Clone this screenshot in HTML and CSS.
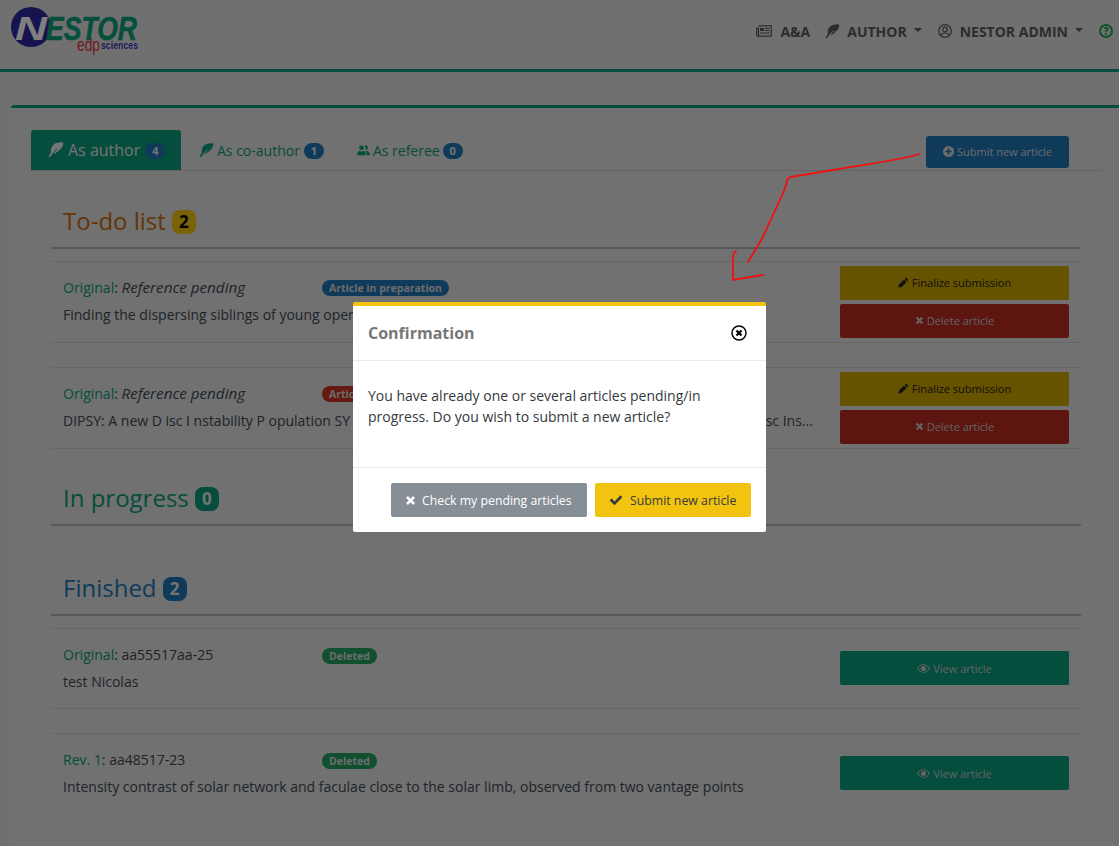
FILE: index.html
```html
<!DOCTYPE html>
<html lang="en">
<head>
<meta charset="utf-8">
<title>Nestor</title>
<link rel="stylesheet" href="styles.css">
</head>
<body>
<svg class="defs" width="0" height="0" aria-hidden="true">
  <symbol id="i-feather" viewBox="0 0 16 16"><path d="M15.3.7C11.8-.2 7.6.6 5 3.2 3 5.2 2.7 8 3 10.3L.5 14.6l1 .8L5 11.2l3.6-4.4.6.5L6 11.6l1.2.1 1.7-1.3-1-.2 2.2-.6 1.3-1.2-1.6-.1 2.6-.8C14 5.600 15.400 3 15.300.7z"/></symbol>
  <symbol id="i-users" viewBox="0 0 16 14"><circle cx="5.500" cy="3.500" r="3"/><path d="M0 13c0-3.500 1.500-5.500 3.500-5.800L5.500 8.500l2-1.300C9.500 7.500 11 9.500 11 13z"/><path d="M9 .8a3 3 0 1 1 1.500 5.500c.7-1.500.5-4-1.500-5.500zM10.200 7.400c3.300-.6 5.800 1.600 5.800 5.600h-4c0-2.500-.6-4.200-1.800-5.600z"/></symbol>
  <symbol id="i-plus-c" viewBox="0 0 16 16"><path fill-rule="evenodd" d="M8 0a8 8 0 1 1 0 16A8 8 0 0 1 8 0zM6.800 3.500v3.300H3.500v2.400h3.300v3.300h2.400V9.200h3.300V6.800H9.200V3.500z"/></symbol>
  <symbol id="i-pencil" viewBox="0 0 16 16"><path d="M11.500.8l3.700 3.700-1.700 1.700-3.700-3.700zM8.800 3.500l3.700 3.700-7.400 7.400L.6 15.400l.8-4.500z"/></symbol>
  <symbol id="i-times" viewBox="0 0 16 16"><path d="M4.200 1.500L8 5.300l3.800-3.800 2.700 2.700L10.700 8l3.800 3.800-2.700 2.700L8 10.700l-3.800 3.800-2.700-2.700L5.300 8 1.500 4.200z"/></symbol>
  <symbol id="i-check" viewBox="0 0 16 16"><path d="M.8 8.500l2.200-2.200 3.400 3.400 6.600-7 2.200 2.200-8.800 9.200z"/></symbol>
  <symbol id="i-eye" viewBox="0 0 18 12"><path fill-rule="evenodd" d="M9 0c3.800 0 7 2.500 9 6-2 3.500-5.200 6-9 6S2 9.500 0 6c2-3.500 5.200-6 9-6zm0 1.300C6 1.300 3.300 3.100 1.600 6 3.300 8.900 6 10.700 9 10.700s5.700-1.800 7.400-4.700C14.700 3.100 12 1.300 9 1.300zM9 2.500a3.500 3.500 0 1 1 0 7 3.500 3.500 0 0 1 0-7z"/></symbol>
</svg>

<div class="page">
  <header class="navbar">
    <svg class="logo" width="150" height="60" viewBox="0 0 150 60">
      <circle cx="31" cy="27" r="20" fill="#2a289e"/>
      <text class="logo-n" x="15" y="40" textLength="32" lengthAdjust="spacingAndGlyphs">N</text>
      <text class="logo-estor" x="46" y="40" textLength="91" lengthAdjust="spacingAndGlyphs">ESTOR</text>
      <text class="logo-edp" x="77" y="51" textLength="23" lengthAdjust="spacingAndGlyphs">edp</text>
      <text class="logo-sciences" x="101" y="49" textLength="37" lengthAdjust="spacingAndGlyphs">sciences</text>
    </svg>
    <nav class="nav-links">
      <span class="nav-item nav-aa">
        <svg class="nav-ico" width="16" height="12" viewBox="0 0 16 12"><path fill="none" stroke="currentColor" stroke-width="1.200" d="M2.500.8h12.700v10.400H1.500A.8.800 0 0 1 .7 10.400V3h1.800v7.500"/><path fill="currentColor" d="M4 3h4v3H4zM9 3h4.500v1H9zM9 5h4.500v1H9zM4 7.500h9.500v1H4z"/></svg>
        <span>A&amp;A</span>
      </span>
      <span class="nav-item nav-author">
        <svg class="nav-ico" width="15" height="15"><use href="#i-feather"/></svg>
        <span>AUTHOR</span><i class="caret"></i>
      </span>
      <span class="nav-item">
        <svg class="nav-ico" width="14" height="14" viewBox="0 0 14 14"><g fill="none" stroke="currentColor" stroke-width="1.200"><circle cx="7" cy="7" r="6.300"/><circle cx="7" cy="5.500" r="2.300"/><path d="M2.800 11.500c.6-1.800 2-2.500 4.200-2.500s3.600.7 4.200 2.500"/></g></svg>
        <span>NESTOR ADMIN</span><i class="caret"></i>
      </span>
      <span class="help" aria-label="Help">?</span>
    </nav>
  </header>

  <main class="card">
    <div class="tabs">
      <a class="tab active">
        <svg width="16" height="16"><use href="#i-feather"/></svg>
        <span>As author</span><b class="pill">4</b>
      </a>
      <a class="tab">
        <svg width="15" height="15"><use href="#i-feather"/></svg>
        <span>As co-author</span><b class="pill">1</b>
      </a>
      <a class="tab tab-ref">
        <svg width="13" height="11"><use href="#i-users"/></svg>
        <span>As referee</span><b class="pill">0</b>
      </a>
      <a class="submit-btn">
        <svg width="11" height="11"><use href="#i-plus-c"/></svg>
        <span>Submit new article</span>
      </a>
    </div>

    <section class="group group-todo">
      <h2 class="heading heading-todo"><span>To-do list</span><span class="count count-yellow">2</span></h2>
      <div class="rows">
        <article class="row">
          <div class="row-main">
            <div class="row-meta"><span class="ref"><a class="kind">Original</a>: <em>Reference pending</em></span><span class="status status-blue">Article in preparation</span></div>
            <p class="row-title">Finding the dispersing siblings of young open clusters with a new approach</p>
          </div>
          <div class="actions">
            <a class="btn btn-yellow"><svg width="11" height="11"><use href="#i-pencil"/></svg><span>Finalize submission</span></a>
            <a class="btn btn-red"><svg width="9" height="9"><use href="#i-times"/></svg><span>Delete article</span></a>
          </div>
        </article>
        <article class="row">
          <div class="row-main">
            <div class="row-meta"><span class="ref"><a class="kind">Original</a>: <em>Reference pending</em></span><span class="status status-red">Article in preparation</span></div>
            <p class="row-title">DIPSY: A new D isc I nstability P opulation SY nthesis tool for studying the global stellar evolution of those D isc Ins...</p>
          </div>
          <div class="actions">
            <a class="btn btn-yellow"><svg width="11" height="11"><use href="#i-pencil"/></svg><span>Finalize submission</span></a>
            <a class="btn btn-red"><svg width="9" height="9"><use href="#i-times"/></svg><span>Delete article</span></a>
          </div>
        </article>
      </div>
    </section>

    <section class="group group-progress">
      <h2 class="heading heading-green"><span>In progress</span><span class="count count-green">0</span></h2>
    </section>

    <section class="group group-finished">
      <h2 class="heading heading-blue"><span>Finished</span><span class="count count-blue">2</span></h2>
      <div class="rows">
        <article class="row row-finished">
          <div class="row-main">
            <div class="row-meta"><span class="ref"><a class="kind">Original</a>: aa55517aa-25</span><span class="status status-green">Deleted</span></div>
            <p class="row-title">test Nicolas</p>
          </div>
          <div class="actions">
            <a class="btn btn-teal"><svg width="13" height="9"><use href="#i-eye"/></svg><span>View article</span></a>
          </div>
        </article>
        <article class="row row-finished">
          <div class="row-main">
            <div class="row-meta"><span class="ref"><a class="kind">Rev. 1</a>: aa48517-23</span><span class="status status-green">Deleted</span></div>
            <p class="row-title">Intensity contrast of solar network and faculae close to the solar limb, observed from two vantage points</p>
          </div>
          <div class="actions">
            <a class="btn btn-teal"><svg width="13" height="9"><use href="#i-eye"/></svg><span>View article</span></a>
          </div>
        </article>
      </div>
    </section>
  </main>
</div>

<div class="backdrop"></div>

<svg class="arrow" width="1119" height="846" viewBox="0 0 1119 846">
  <path d="M919 154C905 159 880 162 833 170L790 177C788 178 787 179 787 181C786 186 784 190 783 193L767 228C764 235 762 239 760 242L748 262" fill="none" stroke="#f01010" stroke-width="1.800" stroke-linecap="round"/>
  <path d="M736 251C734 252 733 254 733 258L733 280L763 275" fill="none" stroke="#f01010" stroke-width="1.800" stroke-linecap="round"/>
</svg>

<div class="modal" role="dialog">
  <div class="modal-head">
    <h3>Confirmation</h3>
    <svg class="modal-close" width="16" height="16" viewBox="0 0 16 16"><circle cx="8" cy="8" r="7" fill="none" stroke="#000" stroke-width="1.500"/><path d="M5.500 5.500l5 5M10.500 5.500l-5 5" stroke="#000" stroke-width="2.200"/></svg>
  </div>
  <div class="modal-body">You have already one or several articles pending/in progress. Do you wish to submit a new article?</div>
  <div class="modal-foot">
    <a class="mbtn mbtn-grey"><svg width="11" height="11"><use href="#i-times"/></svg><span>Check my pending articles</span></a>
    <a class="mbtn mbtn-yellow"><svg width="14" height="14"><use href="#i-check"/></svg><span>Submit new article</span></a>
  </div>
</div>
</body>
</html>
```
FILE: styles.css
```css
* { box-sizing: border-box; }
html, body { margin: 0; height: 100%; }
body {
  font-family: "Open Sans", "Liberation Sans", sans-serif;
  font-size: 14px;
  color: #3d4852;
  background: #e0e0e0;
  overflow: hidden;
  height: 846px;
  position: relative;
}
.defs { position: absolute; }
svg { fill: currentColor; flex: none; }
.page { height: 846px; overflow: hidden; }

.navbar {
  height: 72px;
  border-bottom: 3px solid #0a9a78;
  display: flex;
  justify-content: space-between;
  align-items: flex-start;
}
.logo { display: block; }
.logo text { font-family: "Liberation Sans", sans-serif; }
.logo-n { font-size: 34px; font-weight: 700; font-style: italic; fill: #fff; }
.logo-estor { font-size: 34px; font-weight: 700; font-style: italic; fill: #0c9e79; stroke: #0c9e79; stroke-width: .6px; }
.logo-edp { font-size: 19px; fill: #e03038; }
.logo-sciences { font-size: 10.500px; font-weight: 700; fill: #3c3cb8; }

.nav-links {
  display: flex;
  align-items: center;
  gap: 16px;
  height: 20px;
  margin-top: 21px;
  margin-right: 6px;
  font-weight: 700;
  font-size: 14px;
  color: #585858;
}
.nav-item { display: flex; align-items: center; gap: 8px; white-space: nowrap; }
.nav-aa { margin-right: -2px; }
.nav-author .nav-ico { margin: 0 -1px 0 1px; }
.caret {
  width: 0; height: 0;
  margin-left: -1px;
  margin-top: -2px;
  border-left: 4px solid transparent;
  border-right: 4px solid transparent;
  border-top: 4px solid currentColor;
}
.help {
  width: 14px; height: 14px;
  border: 2px solid #23a455;
  border-radius: 50%;
  color: #23a455;
  font-size: 10px;
  font-weight: 800;
  line-height: 10px;
  text-align: center;
}

.card {
  margin: 33px 0 0 11px;
  height: 741px;
  border-top: 3px solid #0a9a78;
  border-radius: 3px 0 0 0;
  background: #e2e2e2;
  padding: 22px 18px 0 20px;
}
.tabs {
  display: flex;
  align-items: flex-start;
  height: 41px;
  border-bottom: 1px solid #c6c6c6;
  position: relative;
}
.tab {
  height: 40px;
  display: flex;
  align-items: center;
  gap: 3px;
  color: #0a9a78;
  font-size: 14px;
  padding: 1px 0 0 18px;
  white-space: nowrap;
}
.tab-ref { padding-left: 33px; }
.tab-ref .pill { margin-left: 0; }
.tab.active {
  width: 150px;
  gap: 4px;
  background: #0a9a78;
  color: #e8e8e8;
  font-size: 16px;
  border-radius: 3px 3px 0 0;
  padding: 0 0 0 17px;
}
.pill {
  min-width: 20px;
  height: 16px;
  margin-left: 1px;
  margin-top: 1px;
  border-radius: 8px;
  background: #1f75b5;
  color: #e8e8e8;
  font-size: 11px;
  line-height: 16px;
  text-align: center;
}
.active .pill { margin-top: 2px; }
.submit-btn {
  position: absolute;
  left: 895px; top: 6px;
  width: 143px; height: 32px;
  padding-bottom: 1px;
  background: #1f75b5;
  color: #d8d8d8;
  border-radius: 3px;
  font-size: 11px;
  display: flex;
  align-items: center;
  justify-content: center;
  gap: 3px;
}

.group { padding: 0 20px; }
.heading {
  margin: 0;
  font-weight: 400;
  font-size: 24px;
  line-height: 33px;
  padding: 0 0 10px 12px;
  border-bottom: 2px solid #b3b3b3;
  display: flex;
  align-items: center;
  gap: 6px;
  white-space: nowrap;
}
.group-todo .heading { margin-top: 33px; }
.heading-todo { color: #c96d0a; }
.heading-green { color: #0a9a78; }
.heading-blue { color: #1f75b5; }
.count {
  width: 24px; height: 24px;
  margin-top: 2px;
  border-radius: 8px;
  font-size: 17px;
  line-height: 24px;
  font-weight: 700;
  text-align: center;
}
.count-yellow { background: #f2c40f; color: #000; }
.count-green { background: #0a9a78; color: #e8e8e8; }
.count-blue { background: #1f75b5; color: #e8e8e8; }

.rows { padding-top: 12px; }
.row {
  height: 82px;
  margin-bottom: 24px;
  border-top: 1px solid #cfcfcf;
  border-bottom: 1px solid #cfcfcf;
  padding: 0 12px;
  display: flex;
  justify-content: space-between;
}
.row + .row { margin-bottom: 0; }
.row-main { padding-top: 14px; width: 748px; flex: none; }
.row-meta { display: flex; height: 22px; align-items: center; }
.row-meta em { font-size: 15.200px; }
.ref { width: 259px; white-space: nowrap; flex: none; }
.kind { color: #0a9a78; }
.status {
  height: 16px; padding: 0 7px;
  margin-top: 2px;
  border-radius: 8px;
  font-size: 10.500px;
  font-weight: 700;
  line-height: 16px;
  color: #d8d8d8;
  white-space: nowrap;
}
.status-blue { background: #1f75b5; }
.status-red { background: #cc3322; }
.status-green { background: #20a05f; }
.row-title { margin: 7px 0 0; white-space: nowrap; }

.actions { display: flex; flex-direction: column; justify-content: center; gap: 4px; width: 229px; flex: none; }
.btn {
  height: 34px;
  border-radius: 2px;
  font-size: 11px;
  display: flex;
  align-items: center;
  justify-content: center;
  gap: 3px;
  white-space: nowrap;
}
.btn-yellow, .btn-red { padding-bottom: 2px; }
.btn-yellow { background: #cca600; color: #222; }
.btn-red { background: #ba2a20; color: #c8c8c8; }
.btn-teal { background: #0a9a78; color: #c8c8c8; }

.group-progress { margin-top: 32px; }
.group-finished { margin-top: 45px; }
.row-finished { height: 81px; }
.row-finished + .row-finished { margin-bottom: 0; border-bottom: 0; }
.row-finished .status { margin-top: 4px; }
.row-finished .actions { justify-content: flex-start; padding-top: 22px; }

.backdrop {
  position: absolute;
  inset: 0;
  background: rgba(0, 0, 0, .5);
}
.arrow { position: absolute; left: 0; top: 0; }

.modal {
  position: absolute;
  left: 353px; top: 302px;
  width: 413px; height: 230px;
  background: #fff;
  border-top: 4px solid #f2c40f;
  border-radius: 2px;
  display: flex;
  flex-direction: column;
}
.modal-head {
  height: 55px;
  border-bottom: 1px solid #e9ecef;
  padding: 0 19px 0 15px;
  display: flex;
  align-items: center;
  justify-content: space-between;
}
.modal-head h3 { margin: 0; font-size: 16px; font-weight: 700; color: #777; }
.modal-close { display: block; }
.modal-body {
  height: 106px;
  padding: 24px 15px 0;
  font-size: 14px;
  line-height: 21px;
  color: #343a40;
}
.modal-foot {
  flex: 1;
  border-top: 1px solid #e9ecef;
  display: flex;
  justify-content: flex-end;
  gap: 8px;
  padding: 15px 15px 0 0;
}
.mbtn {
  height: 34px;
  border-radius: 2px;
  font-size: 12.300px;
  display: flex;
  align-items: center;
  white-space: nowrap;
}
.mbtn-grey { width: 196px; background: #868e96; color: #fff; padding-left: 14px; gap: 6px; }
.mbtn-yellow { width: 156px; background: #f2c40f; color: #343a40; padding-left: 14px; gap: 7px; }
```
